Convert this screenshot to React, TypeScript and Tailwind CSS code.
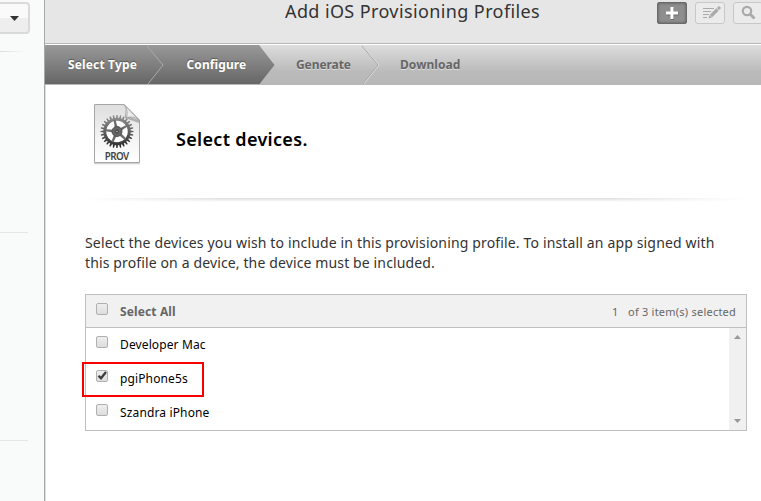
import React from "react";

const teeth = Array.from({ length: 28 }, (_, i) => (i * 360) / 28);
const spokes = [60, 132, 204, 276, 348];

function ProvIcon() {
  return (
    <svg className="block h-[64px] w-[50px]" viewBox="0 0 50 64">
      <defs>
        <linearGradient id="paper" x1="0" y1="0" x2="0" y2="1">
          <stop offset="0" stopColor="#dedede" />
          <stop offset="0.6" stopColor="#f4f4f4" />
          <stop offset="1" stopColor="#fff" />
        </linearGradient>
        <linearGradient id="gear" gradientUnits="userSpaceOnUse" x1="0" y1="-16" x2="0" y2="16">
          <stop offset="0" stopColor="#959595" />
          <stop offset="0.5" stopColor="#606060" />
          <stop offset="1" stopColor="#2c2c2c" />
        </linearGradient>
        <linearGradient id="fold" x1="0" y1="1" x2="1" y2="0">
          <stop offset="0" stopColor="#fff" />
          <stop offset="0.5" stopColor="#e6e6e6" />
          <stop offset="1" stopColor="#bbb" />
        </linearGradient>
      </defs>
      <path d="M2 61.500H48" stroke="#bbb" strokeWidth="1.500" opacity="0.7" />
      <path d="M2.500 2.500H32L47.500 18V60.500H2.500Z" fill="url(#paper)" stroke="#a6a6a6" />
      <path d="M33 4V16L47 21V18L34 14Z" fill="#777" opacity="0.5" />
      <g transform="translate(25 29.500)" fill="none">
        <circle r="11.500" fill="#fff" />
        {teeth.map((a) => {
          const shade = Math.round(90 + Math.cos((a * Math.PI) / 180) * 50);
          return (
            <path key={a} d="M-1 -13L-0.600 -16.500H0.600L1 -13Z" fill={`rgb(${shade},${shade},${shade})`} transform={`rotate(${a})`} />
          );
        })}
        <circle r="12.200" stroke="url(#gear)" strokeWidth="2.900" />
        {spokes.map((a) => (
          <path key={a} d="M-1 -11.500L-1.600 0H1.600L1 -11.500Z" fill="#6c6c6c" transform={`rotate(${a})`} />
        ))}
        <circle r="5" fill="#666" stroke="#505050" />
        <circle r="1.500" fill="#999" stroke="#333" strokeWidth="0.900" />
      </g>
      <path d="M32 2.500C35.500 7 35.500 12 34.500 15.500C39 14.500 44 15 47.500 18.500Z" fill="url(#fold)" stroke="#a0a0a0" strokeWidth="0.900" />
      <text x="12.700" y="57.800" fontSize="9.800" fontFamily="Noto Sans, sans-serif" fontWeight="600" fill="#444" textLength="24.500">PROV</text>
    </svg>
  );
}

function CheckBox({ checked = false }: { checked?: boolean }) {
  return (
    <span className="block h-3 w-3 shrink-0 rounded-[2px] border border-[#b0b0b0] bg-linear-to-b from-[#eeeeee] to-[#dddddd]">
      {checked && (
        <svg className="-mt-px block h-[11px] w-[11px]" viewBox="0 0 11 11" fill="none" stroke="#3c3c3c" strokeWidth="2.300">
          <path d="M1.500 5.800L4 8.300L9 2" />
        </svg>
      )}
    </span>
  );
}

function Device({ name, checked, text }: { name: string; checked?: boolean; text: string }) {
  return (
    <div className="flex h-[34px] pl-[10px]">
      <div className="pt-[8px]"><CheckBox checked={checked} /></div>
      <span className={`ml-3 pt-[8px] text-[12px] leading-[18px] whitespace-nowrap text-black ${text}`}>{name}</span>
    </div>
  );
}

function Steps() {
  return (
    <nav className="relative h-10 bg-linear-to-b from-[#dddddd] via-[#bbbbbb] via-65% to-[#b7b7b7] text-[12px] leading-10 font-bold">
      <svg className="absolute top-0 left-0 h-10 w-[350px]" viewBox="0 0 350 40" fill="none">
        <defs>
          <linearGradient id="done" x1="0" y1="0" x2="0" y2="1">
            <stop offset="0" stopColor="#999" />
            <stop offset="1" stopColor="#666" />
          </linearGradient>
        </defs>
        <path d="M0 0H214L229.500 20L214.500 39H0Z" fill="url(#done)" />
        <path d="M102 1L118 20L103 39" stroke="#aaa" />
        <path d="M317 1L333 20L318 39" stroke="#a6a6a6" />
        <path d="M318 1L334 20L319 39" stroke="#dadada" />
      </svg>
      <ol className="relative flex whitespace-nowrap">
        <li className="ml-[23px] w-[118.500px] tracking-[0.150px] text-white [text-shadow:0_-1px_1px_#555]">Select Type</li>
        <li className="w-[109.500px] tracking-[0.100px] text-white [text-shadow:0_-1px_1px_#555]">Configure</li>
        <li className="w-[104px] tracking-[-0.080px] text-[#666] [text-shadow:0_1px_0_#ddd]">Generate</li>
        <li className="tracking-[0.050px] text-[#666] [text-shadow:0_1px_0_#ddd]">Download</li>
      </ol>
    </nav>
  );
}

export default function App() {
  return (
    <div className="flex h-[501px] w-[761px] overflow-hidden bg-white font-['Noto_Sans','Open_Sans',sans-serif]">
      <aside className="h-full w-[46px] shrink-0 border-r border-[#dddddd] bg-[#f9fbfa]">
        <div className="h-full border-r border-[#a8a8a8]">
          <div className="h-[51px] pt-[2px]">
            <div className="flex h-8 w-[30px] items-center justify-end rounded-r-[4px] border-2 border-l-0 border-[#dadada] bg-linear-to-b from-[#fafafa] from-50% to-[#eeeeee] to-50% pr-[9px]">
              <svg className="h-[5px] w-[9px]" viewBox="0 0 9 5"><path d="M0 0H9L4.500 5Z" fill="#333" /></svg>
            </div>
          </div>
          <div className="h-px w-7 bg-linear-to-r from-[#dddddd] to-transparent" />
          <div className="mt-[180px] h-px w-7 bg-[#e4e5e4]" />
          <div className="mt-[207px] h-px w-7 bg-[#e4e5e4]" />
        </div>
      </aside>
      <main className="-ml-px w-[716px] shrink-0">
        <header className="flex h-[45px] border-b border-white bg-[#e6e6e6] shadow-[inset_0_-1px_0_#b8b8b8]">
          <h1 className="ml-[240px] w-[372px] shrink-0 text-[18px] leading-[23px] tracking-[0.390px] whitespace-nowrap text-[#333]">Add iOS Provisioning Profiles</h1>
          <div className="flex shrink-0 gap-2 pt-[2px]">
            <div className="flex h-[22px] w-[30px] shrink-0 items-center justify-center rounded-[2px] border border-[#6a6a6a] bg-[#8e8e8e] shadow-[inset_0_0_3px_#555]">
              <svg className="h-[14px] w-[14px]" viewBox="0 0 14 14" fill="none"><path d="M7.500 2V14M1.500 8H13.500" stroke="#666" strokeWidth="3" /><path d="M7 1V13M1 7H13" stroke="#fff" strokeWidth="3" /></svg>
            </div>
            <div className="h-[22px] w-[30px] shrink-0 rounded-[3px] border border-[#c8c8c8] bg-[#ebebeb]">
              <svg className="h-5 w-7" viewBox="0 0 28 20" fill="none" stroke="#aaa">
                <path d="M7 5.500H18M7 8.500H15M7 11.500H13M7 14.500H11" />
                <path d="M15 13L21.500 6.500" strokeWidth="3.200" />
                <path d="M22 6L24 4" strokeWidth="3" />
                <path d="M12.500 15.500L13.500 12L16 14.500Z" fill="#aaa" stroke="none" />
              </svg>
            </div>
            <div className="h-[22px] w-[30px] shrink-0 rounded-[3px] border border-[#c8c8c8] bg-[#ebebeb]">
              <svg className="h-5 w-7" viewBox="0 0 28 20" fill="none" stroke="#aaa">
                <circle cx="13" cy="8" r="4.200" strokeWidth="2.200" />
                <path d="M16 11L20.500 15.500" strokeWidth="2.800" />
              </svg>
            </div>
          </div>
        </header>
        <Steps />
        <section className="pl-10">
          <div className="flex h-[113px] pt-[17px] pl-[7px]">
            <ProvIcon />
            <h2 className="ml-[34px] pt-[25px] text-[18px] leading-[25px] font-semibold tracking-[0.320px] whitespace-nowrap text-black">Select devices.</h2>
          </div>
          <div className="h-1 w-[660px] bg-linear-to-b from-[#dedede] to-white [mask-image:linear-gradient(90deg,transparent,black_20%,black_80%,transparent)]" />
          <div className="pt-[31px] text-[14px] leading-5 whitespace-nowrap text-[#333]">
            <p className="tracking-[0.150px]">Select the devices you wish to include in this provisioning profile. To install an app signed with</p>
            <p className="tracking-[0.130px]">this profile on a device, the device must be included.</p>
          </div>
          <div className="relative mt-[21px] h-[137px] w-[662px] border border-[#bfbfbf]">
            <div className="flex h-[33px] border-b border-[#bfbfbf] bg-[#f1f1f1] pl-[10px] text-[#666]">
              <div className="pt-[8px]"><CheckBox /></div>
              <span className="ml-3 w-[492px] pt-[8px] text-[12px] leading-[18px] font-bold tracking-[0.120px]">Select All</span>
              <span className="w-[16px] pt-[8px] text-[11px] leading-[17px]">1</span>
              <span className="pt-[8px] text-[11px] leading-[17px] tracking-[0.230px] whitespace-nowrap">of 3 item(s) selected</span>
            </div>
            <div className="flex h-[102px]">
              <div className="w-[643px]">
                <Device name="Developer Mac" text="tracking-[0.120px]" />
                <Device name="pgiPhone5s" checked text="tracking-[0.120px]" />
                <Device name="Szandra iPhone" text="tracking-[0.140px]" />
              </div>
              <div className="flex w-[17px] flex-col items-center justify-between bg-[#f0f0f0] py-[7px]">
                <svg className="h-[4px] w-[7px]" viewBox="0 0 7 4"><path d="M0 4L3.500 0L7 4Z" fill="#999" /></svg>
                <svg className="h-[4px] w-[7px]" viewBox="0 0 7 4"><path d="M0 0L3.500 4L7 0Z" fill="#999" /></svg>
              </div>
            </div>
            <div className="absolute top-[67px] left-[-4px] h-[35px] w-[122px] border-2 border-[#f80000]" />
          </div>
        </section>
      </main>
    </div>
  );
}
